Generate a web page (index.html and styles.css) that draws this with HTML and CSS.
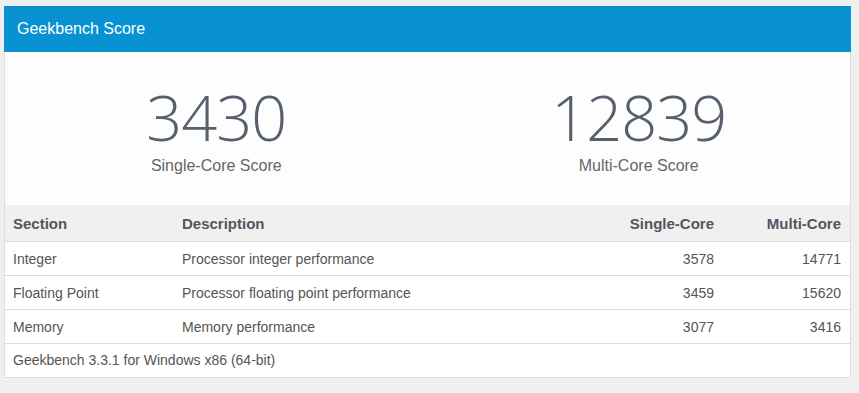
FILE: index.html
```html
<!DOCTYPE html>
<html lang="en">
<head>
  <meta charset="UTF-8" />
  <title>Geekbench Score</title>
  <link rel="stylesheet" href="styles.css">
</head>
<body>
  <div class="panel">
    <div class="panel-heading">Geekbench Score</div>

    <div class="scores">
      <div class="score">
        <div class="score-value">3430</div>
        <div class="score-label">Single-Core Score</div>
      </div>
      <div class="score">
        <div class="score-value">12839</div>
        <div class="score-label">Multi-Core Score</div>
      </div>
    </div>

    <table class="results">
      <thead>
        <tr>
          <th class="col-section">Section</th>
          <th>Description</th>
          <th class="num col-core">Single-Core</th>
          <th class="num col-core">Multi-Core</th>
        </tr>
      </thead>
      <tbody>
        <tr>
          <td>Integer</td>
          <td>Processor integer performance</td>
          <td class="num">3578</td>
          <td class="num">14771</td>
        </tr>
        <tr>
          <td>Floating Point</td>
          <td>Processor floating point performance</td>
          <td class="num">3459</td>
          <td class="num">15620</td>
        </tr>
        <tr>
          <td>Memory</td>
          <td>Memory performance</td>
          <td class="num">3077</td>
          <td class="num">3416</td>
        </tr>
      </tbody>
    </table>

    <div class="panel-footer">Geekbench 3.3.1 for Windows x86 (64-bit)</div>
  </div>
</body>
</html>
```

FILE: styles.css
```css
body {
  margin: 0;
  padding: 6px 8px 0 4px;
  background-color: #efefef;
  font-family: "Liberation Sans", Arial, sans-serif;
  color: #555;
}
.panel {
  background-color: #fff;
  border: 1px solid #ddd;
  border-top: none;
}
.panel-heading {
  background-color: #0992d2;
  color: #fff;
  font-size: 16px;
  line-height: 20px;
  padding: 13px 12px;
  margin: 0 -1px;
  padding-left: 13px;
}

/* Big score numbers */
.scores {
  display: grid;
  grid-template-columns: 1fr 1fr;
  padding: 29px 0 29px;
  background-color: #fdfdfd;
}
.score {
  text-align: center;
}
.score-value {
  font-family: "Open Sans", sans-serif;
  font-weight: 300;
  font-size: 63px;
  line-height: 72px;
  color: #56606c;
  letter-spacing: -1px;
}
.score-label {
  font-size: 16px;
  line-height: 20px;
  color: #666;
  margin-top: 3px;
}

/* Section table */
.results {
  width: 100%;
  border-collapse: collapse;
  font-size: 14px;
}
.results th,
.results td {
  padding: 0 8px;
  text-align: left;
}
.results th {
  height: 36px;
  background-color: #f0f0f0;
  color: #50575f;
  font-size: 15px;
  font-weight: bold;
  border-bottom: 1px solid #ddd;
}
.results td {
  height: 33px;
  border-bottom: 1px solid #ddd;
}
.results .num {
  text-align: right;
  padding-right: 9px;
}
.col-section {
  width: 153px;
}
.col-core {
  width: 110px;
}
.panel-footer {
  font-size: 14px;
  line-height: 33px;
  padding: 0 8px;
}
```
